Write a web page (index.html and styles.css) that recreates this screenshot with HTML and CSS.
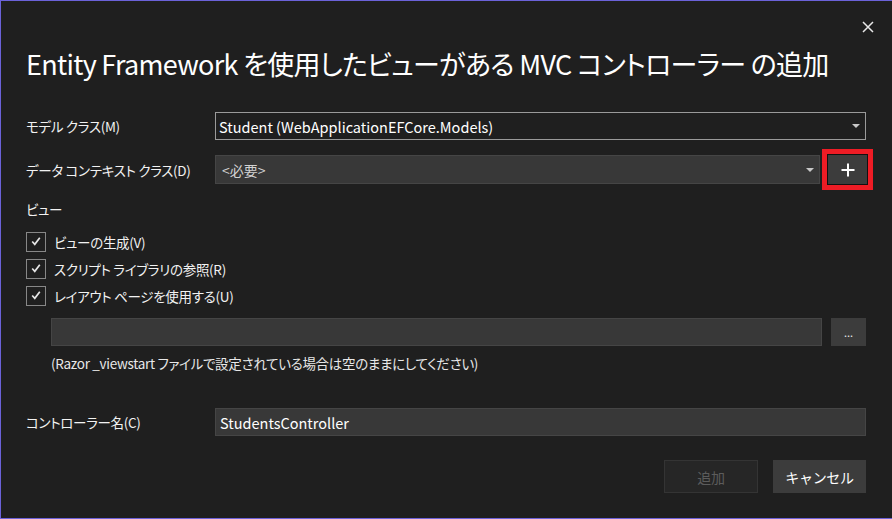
FILE: index.html
```html
<!DOCTYPE html>
<html lang="ja">
<head>
<meta charset="utf-8">
<title>MVC コントローラーの追加</title>
<link rel="stylesheet" href="styles.css">
</head>
<body>
<div class="dialog">
  <div class="titlebar">
    <span class="close" aria-label="閉じる">
      <svg width="12" height="12" viewBox="0 0 12 12"><path d="M1 1 L11 11 M11 1 L1 11" stroke="#e8e8e8" stroke-width="1.5" fill="none"/></svg>
    </span>
  </div>
  <h1 class="title">Entity Framework を使用したビューがある MVC コントローラー の追加</h1>

  <div class="row row-model">
    <label class="label">モデル クラス(M)</label>
    <div class="combo combo-outline">
      <span class="combo-text">Student (WebApplicationEFCore.Models)</span>
      <span class="arrow"></span>
    </div>
  </div>

  <div class="row row-context">
    <label class="label">データ コンテキスト クラス(D)</label>
    <div class="combo combo-filled">
      <span class="combo-text muted">&lt;必要&gt;</span>
      <span class="arrow"></span>
    </div>
    <div class="highlight">
      <button class="plus-btn" aria-label="追加">
        <svg width="14" height="14" viewBox="0 0 14 14"><path d="M7 0.5 V13.5 M0.5 7 H13.5" stroke="#ffffff" stroke-width="2" fill="none"/></svg>
      </button>
    </div>
  </div>

  <div class="section-label">ビュー</div>

  <div class="checks">
    <div class="check-row"><span class="box"><svg width="19" height="19" viewBox="0 0 19 19"><path d="M5.5 9.5 L8.2 12.5 L13.5 5.5" stroke="#e6e6e6" stroke-width="1.8" fill="none"/></svg></span><span>ビューの生成(V)</span></div>
    <div class="check-row"><span class="box"><svg width="19" height="19" viewBox="0 0 19 19"><path d="M5.5 9.5 L8.2 12.5 L13.5 5.5" stroke="#e6e6e6" stroke-width="1.8" fill="none"/></svg></span><span>スクリプト ライブラリの参照(R)</span></div>
    <div class="check-row"><span class="box"><svg width="19" height="19" viewBox="0 0 19 19"><path d="M5.5 9.5 L8.2 12.5 L13.5 5.5" stroke="#e6e6e6" stroke-width="1.8" fill="none"/></svg></span><span>レイアウト ページを使用する(U)</span></div>
  </div>

  <div class="layout-row">
    <div class="field field-layout"></div>
    <button class="browse-btn">...</button>
  </div>
  <div class="hint">(Razor _viewstart ファイルで設定されている場合は空のままにしてください)</div>

  <div class="row row-controller">
    <label class="label">コントローラー名(C)</label>
    <div class="field field-controller">StudentsController</div>
  </div>

  <div class="actions">
    <button class="btn btn-disabled" disabled>追加</button>
    <button class="btn btn-cancel">キャンセル</button>
  </div>
</div>
</body>
</html>
```
FILE: styles.css
```css
* { box-sizing: border-box; }
html, body { margin: 0; padding: 0; background: #1f1f1f; }
body {
  font-family: "Noto Sans CJK JP", "Noto Sans", sans-serif;
  font-feature-settings: "palt";
  color: #f2f2f2;
  font-size: 13.5px;
  letter-spacing: -0.3px;
}
.dialog {
  width: 892px;
  height: 519px;
  background: #1f1f1f;
  border-left: 1px solid #6b62d9;
  border-top: 1px solid #6b62d9;
  border-bottom: 1px solid #6b62d9;
  padding: 0 26px 0 25px;
  overflow: hidden;
}
.titlebar {
  display: flex;
  justify-content: flex-end;
  padding-top: 20px;
  height: 34px;
}
.close { display: block; width: 12px; height: 12px; margin-right: -8px; }
.close svg { display: block; }
.title {
  margin: 9px 0 0;
  font-size: 27px;
  font-weight: 400;
  line-height: 40px;
  height: 40px;
  color: #ffffff;
  white-space: nowrap;
  letter-spacing: -0.7px;
}
.row { display: flex; align-items: center; }
.label {
  width: 189px;
  flex: none;
  color: #f2f2f2;
}
.row-model { margin-top: 28px; height: 28px; }
.combo {
  flex: 1;
  height: 28px;
  display: flex;
  align-items: center;
  justify-content: space-between;
  padding: 0 5px 0 3px;
  font-size: 14.5px;
  letter-spacing: 0;
}
.combo-outline { border: 1px solid #9a9a9a; background: #1f1f1f; }
.combo-filled { border: 1px solid #454545; background: #383838; height: 29px; padding-left: 6px; }
.combo-text { color: #ffffff; }
.muted { color: #d2d2d2; font-size: 14px; }
.arrow {
  width: 0; height: 0;
  border-left: 4px solid transparent;
  border-right: 4px solid transparent;
  border-top: 4px solid #c8c8c8;
}
.row-context { margin-top: 9px; height: 41px; }
.highlight {
  flex: none;
  width: 51px;
  height: 41px;
  margin-left: 2px;
  margin-right: -7px;
  border: 5px solid #ee1c25;
  background: #111111;
  padding: 1px;
}
.plus-btn {
  display: flex;
  align-items: center;
  justify-content: center;
  width: 100%;
  height: 100%;
  border: 0;
  background: #3c3c3c;
  padding: 0;
}
.section-label { margin-top: 9px; line-height: 20px; height: 20px; }
.checks { margin-top: 9px; }
.check-row {
  display: flex;
  align-items: center;
  height: 27px;
  gap: 8px;
}
.box {
  width: 20px;
  height: 20px;
  border: 1px solid #878787;
  display: flex;
  align-items: center;
  justify-content: center;
}
.box svg { display: block; }
.layout-row {
  display: flex;
  margin-top: 9px;
  margin-left: 25px;
  height: 28px;
  gap: 9px;
}
.field {
  height: 28px;
  background: #383838;
  border: 1px solid #454545;
  display: flex;
  align-items: center;
  padding-left: 4px;
  font-size: 14.5px;
  letter-spacing: 0;
  color: #ffffff;
}
.field-layout { flex: 1; }
.browse-btn {
  width: 35px;
  height: 28px;
  border: 0;
  background: #3c3c3c;
  color: #e8e8e8;
  font-family: inherit;
  font-size: 11px;
  padding: 0;
  line-height: 28px;
}
.hint {
  margin-top: 7px;
  margin-left: 25px;
  line-height: 20px;
  height: 20px;
  color: #e8e8e8;
  white-space: nowrap;
}
.row-controller { margin-top: 35px; height: 28px; }
.field-controller { flex: 1; }
.actions {
  display: flex;
  justify-content: flex-end;
  gap: 15px;
  margin-top: 24px;
}
.btn {
  height: 33px;
  font-family: inherit;
  font-size: 14px;
  letter-spacing: -0.3px;
  padding: 0;
  border: 1px solid transparent;
}
.btn-disabled {
  width: 94px;
  background: #262626;
  border-color: #343434;
  color: #5c5c5c;
}
.btn-cancel {
  width: 93px;
  background: #3c3c3c;
  color: #ffffff;
}
```
